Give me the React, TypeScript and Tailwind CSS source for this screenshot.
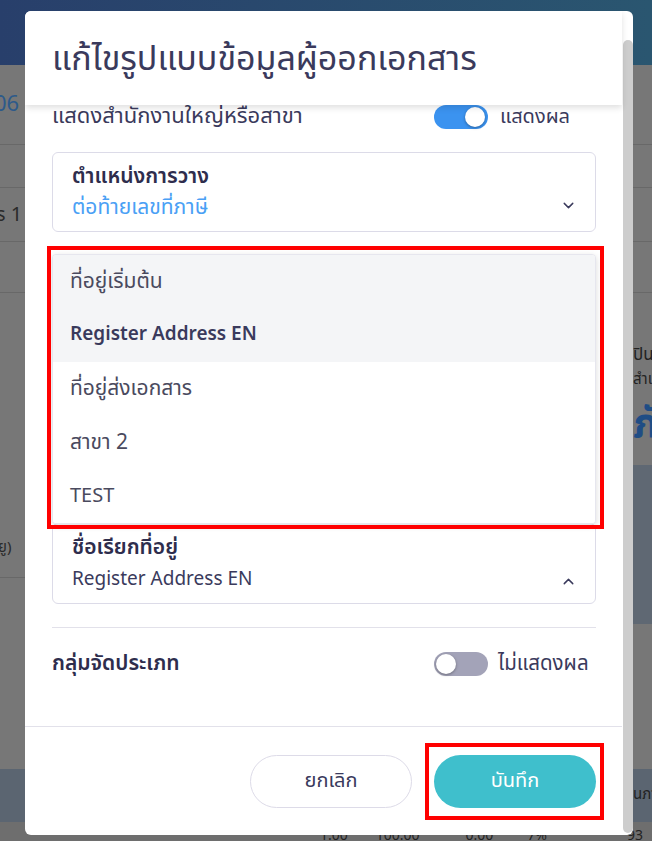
import React from 'react';
import { ChevronDown, ChevronUp } from 'lucide-react';

const font = { fontFamily: '"Noto Sans Thai", "Noto Sans", "Liberation Sans", sans-serif' };

function Toggle({ on }: { on: boolean }) {
  return (
    <div
      className={
        on
          ? 'w-[54px] h-[24px] rounded-full bg-[#3b93f0] flex items-center justify-end px-[3px]'
          : 'w-[54px] h-[24px] rounded-full bg-[#a3a3b8] flex items-center justify-start px-[2px]'
      }
    >
      <div className="w-[20px] h-[20px] rounded-full bg-white shadow-[0_1px_3px_rgba(0,0,0,0.35)]" />
    </div>
  );
}

const options = [
  { label: 'ที่อยู่เริ่มต้น', size: 'text-[21px]' },
  { label: 'Register Address EN', size: 'text-[19px]' },
  { label: 'ที่อยู่ส่งเอกสาร', size: 'text-[21px]' },
  { label: 'สาขา 2', size: 'text-[21px]' },
  { label: 'TEST', size: 'text-[20px]' },
];

function Backdrop() {
  return (
    <div className="absolute inset-0 flex flex-col bg-[#777777]" style={font}>
      <div className="h-[65px] bg-gradient-to-r from-[#283f6b] to-[#2a5670]" />
      <div className="h-[80px] border-b border-[#686868] flex items-center text-[22px] text-[#2d5a8a] -ml-[6px]">06</div>
      <div className="h-[43px] border-b border-[#686868]" />
      <div className="h-[54px] border-b border-[#686868] flex items-center text-[20px] text-[#2a2a2a] -ml-[4px]">s 1</div>
      <div className="h-[51px] border-b border-[#686868]" />
      <div className="flex-1 flex justify-between">
        <div className="flex flex-col w-[25px]">
          <div className="h-[285px] border-b border-[#686868] flex items-end pb-[18px] text-[15px] text-[#2a2a2a] -ml-[2px]">ยู)</div>
        </div>
        <div className="w-[19px] flex flex-col text-[#222] overflow-hidden">
          <div className="h-[49px]" />
          <div className="text-[17px] leading-[26px] whitespace-nowrap">ปิน</div>
          <div className="text-[15px] leading-[24px] whitespace-nowrap">สำเ</div>
          <div className="text-[40px] leading-[44px] mt-[11px] font-bold text-[#1f4d85] whitespace-nowrap">ภั</div>
          <div className="h-[159px] bg-[#5f6873] mt-[18px]" />
        </div>
      </div>
      <div className="h-[53px] bg-[#5b6571] flex justify-end items-center">
        <span className="w-[19px] overflow-hidden text-[15px] text-[#222] whitespace-nowrap">นภา</span>
      </div>
      <div className="h-[19px] bg-[#6e6e6e] flex items-end text-[14px] text-[#222] leading-[10px] overflow-hidden">
        <span className="ml-[320px]">1.00</span>
        <span className="ml-[28px]">100.00</span>
        <span className="ml-[46px]">0.00</span>
        <span className="ml-[34px]">7%</span>
        <span className="ml-[80px]">93</span>
      </div>
    </div>
  );
}

export default function App() {
  return (
    <div className="relative w-[652px] h-[841px] overflow-hidden" style={font}>
      <Backdrop />

      <div className="absolute left-[25px] top-[11px] w-[608px] h-[824px] bg-white rounded-[6px] overflow-hidden flex">
        <div className="w-[597px] flex flex-col">
          <div className="relative z-10 h-[94px] bg-white shadow-[0_3px_6px_rgba(0,0,0,0.12)] pl-[27px] pt-[24px]">
            <h1 className="text-[34px] leading-[50px] text-[#3a3a5c]">แก้ไขรูปแบบข้อมูลผู้ออกเอกสาร</h1>
          </div>

          <div className="relative flex-1 overflow-hidden pl-[27px] pr-[26px]">
            <div className="h-[24px] flex items-center justify-between">
              <span className="text-[22px] text-[#3a3a5c] leading-[24px]">แสดงสำนักงานใหญ่หรือสาขา</span>
              <div className="flex items-center gap-[12px] w-[162px]">
                <Toggle on />
                <span className="text-[20px] text-[#3a3a5c]">แสดงผล</span>
              </div>
            </div>

            <div className="mt-[23px] h-[80px] border border-[#dcdbe8] rounded-[6px] pl-[19px] pr-[18px] pt-[10px] flex items-start justify-between">
              <div className="flex flex-col">
                <span className="text-[21px] leading-[28px] font-semibold text-[#2e2d4d]">ตำแหน่งการวาง</span>
                <span className="text-[21px] leading-[28px] mt-[3px] text-[#4aa0f5]">ต่อท้ายเลขที่ภาษี</span>
              </div>
              <ChevronDown className="mt-[34px] text-[#3a3a5c]" size={17} strokeWidth={2} />
            </div>

            <div className="h-[291px]" />

            <div className="h-[81px] border border-[#dcdbe8] rounded-[6px] pl-[19px] pr-[18px] pt-[10px] flex items-start justify-between">
              <div className="flex flex-col">
                <span className="text-[21px] leading-[28px] font-semibold text-[#2e2d4d]">ชื่อเรียกที่อยู่</span>
                <span className="text-[19px] leading-[28px] mt-[4px] text-[#3a3a5c]">Register Address EN</span>
              </div>
              <ChevronUp className="mt-[39px] text-[#3a3a5c]" size={17} strokeWidth={2} />
            </div>

            <div className="mt-[23px] border-t border-[#e2e1ea]" />

            <div className="mt-[24px] h-[24px] flex items-center justify-between">
              <span className="text-[21px] font-semibold text-[#2e2d4d]">กลุ่มจัดประเภท</span>
              <div className="flex items-center gap-[10px] w-[162px]">
                <Toggle on={false} />
                <span className="text-[20.5px] text-[#3a3a5c]">ไม่แสดงผล</span>
              </div>
            </div>

            <div className="absolute left-[27px] top-[149px] w-[544px] h-[270px] bg-white border border-[#e6e6ee] rounded-[4px] shadow-[0_2px_6px_rgba(0,0,0,0.15)] flex flex-col overflow-hidden">
              {options.map((o, i) => (
                <div
                  key={o.label}
                  className={
                    'h-[54px] flex items-center pl-[17px] ' +
                    o.size +
                    (i < 2 ? ' bg-[#f4f5f7] ' : ' bg-white ') +
                    (i === 1 ? 'font-semibold text-[#3a3a5c]' : 'text-[#4a4a5e]')
                  }
                >
                  {o.label}
                </div>
              ))}
            </div>

            <div className="absolute left-[22px] top-[141px] w-[557px] h-[283px] border-4 border-[#ff0000] pointer-events-none" />
          </div>

          <div className="relative h-[109px] border-t border-[#e2e1ea] flex items-center justify-end gap-[22px] pr-[26px]">
            <button className="w-[162px] h-[53px] rounded-full border border-[#dddbe8] text-[20px] text-[#3a3a5c] bg-white">ยกเลิก</button>
            <button className="w-[162px] h-[53px] rounded-full bg-[#3fbfcc] text-[20px] text-white">บันทึก</button>
            <div className="absolute left-[400px] top-[16px] w-[179px] h-[77px] border-4 border-[#ff0000] pointer-events-none" />
          </div>
        </div>

        <div className="w-[11px] pt-[29px] pb-[2px] flex justify-end">
          <div className="w-[10px] h-full rounded-full bg-[#cdcdcd]" />
        </div>
      </div>
    </div>
  );
}
